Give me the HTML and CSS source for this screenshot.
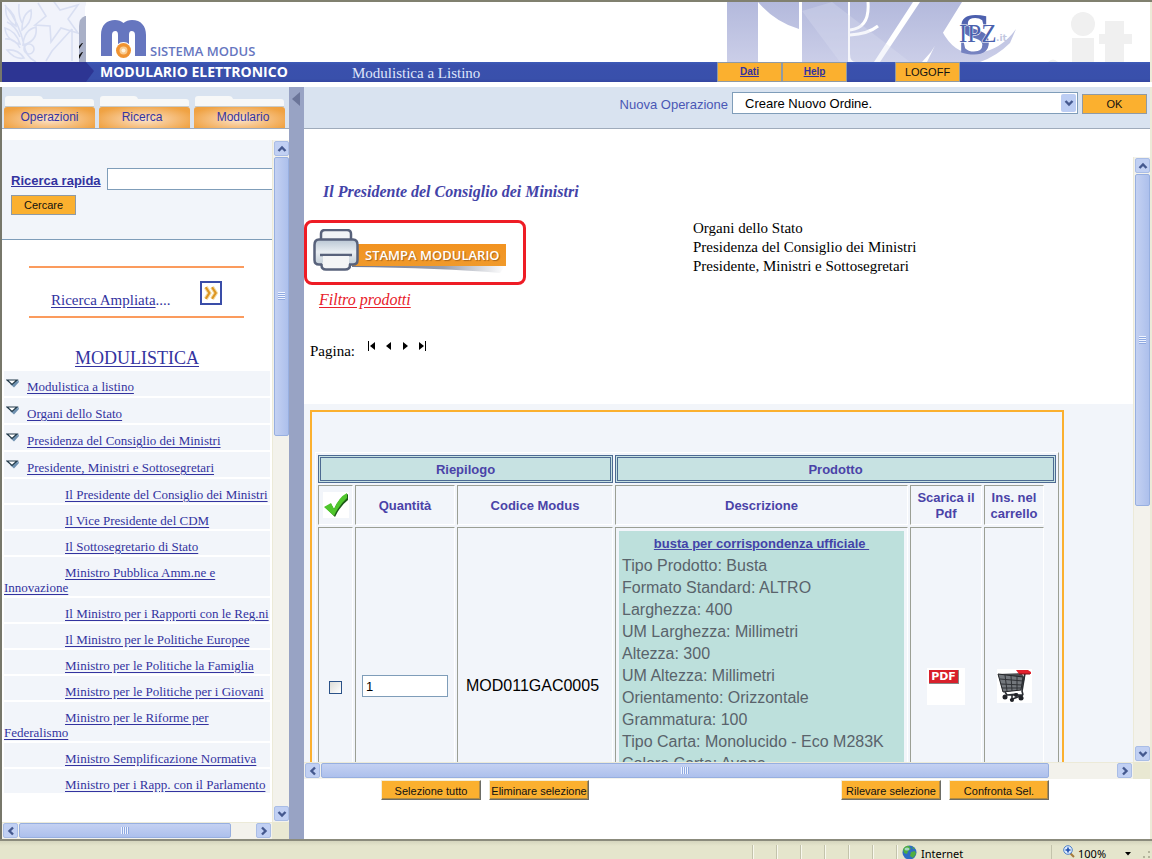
FILE: index.html
```html
<!DOCTYPE html>
<html lang="it">
<head>
<meta charset="utf-8">
<title>Sistema Modus - Modulario Elettronico</title>
<link rel="stylesheet" href="styles.css">
</head>
<body>
<svg class="defs" width="0" height="0" aria-hidden="true">
  <symbol id="chev-up" viewBox="0 0 10 10"><path d="M1.500 7L5 3.500L8.500 7" fill="none" stroke="#45598f" stroke-width="2.400"/></symbol>
  <symbol id="chev-down" viewBox="0 0 10 10"><path d="M1.500 3L5 6.500L8.500 3" fill="none" stroke="#45598f" stroke-width="2.400"/></symbol>
  <symbol id="chev-left" viewBox="0 0 10 10"><path d="M7 1.500L3.500 5L7 8.500" fill="none" stroke="#45598f" stroke-width="2.400"/></symbol>
  <symbol id="chev-right" viewBox="0 0 10 10"><path d="M3 1.500L6.500 5L3 8.500" fill="none" stroke="#45598f" stroke-width="2.400"/></symbol>
  <symbol id="node-open" viewBox="0 0 14 9"><path d="M4 5L13 2V3L8 8.500Z" fill="#6d8fae"/><path d="M1 1H13L7 7Z" fill="#7596b4"/><path d="M1 1H11L6 5.500Z" fill="#fff" stroke="#233b4a" stroke-width="1.200"/></symbol>
</svg>

<header class="banner">
  <svg class="emblem" width="84" height="60" viewBox="0 0 84 60" aria-hidden="true">
    <rect width="84" height="60" fill="#f1f3fb"/>
    <g fill="none" stroke="#d9dff2" stroke-width="1.600">
      <path d="M36 1L44 14L33 23L48 24L49 40L59 26L76 31L66 17L76 3L58 8L50 -3"/>
      <path d="M70 27L50 49L44 59M70 27V59"/>
      <path d="M3 3Q18 22 22 43Q24 55 34 60M17 2Q16 13 20 21M5 20Q14 24 18 35M3 37Q13 36 18 46M29 8Q20 12 20 28Q31 20 29 8ZM34 25Q22 28 21 43Q36 39 34 25ZM4 5Q2 17 14 24Q14 12 4 5ZM3 26Q4 38 18 42Q14 29 3 26ZM5 48Q13 58 22 56Q16 47 5 48Z"/>
      <circle cx="27" cy="47" r="5"/>
    </g>
    <path d="M84 0V60H83V6Q83 2 88 0Z" fill="#fff"/>
    <path d="M83 14Q77 16 77 24V60H84V14Z" fill="#a9b0c7"/>
    <path d="M81 41L77 47V44L80 41ZM81 50L77 57V53L80 50Z" fill="#111"/>
  </svg>
  <div class="brand">
    <svg width="46" height="40" viewBox="0 0 46 40" aria-hidden="true">
      <path d="M0 36V15C0 5 6 0 14 0Q19 0 22.500 3Q26 0 31 0C40 0 45 6 45 15V36H34V15Q34 11 30.500 11Q28 11 28 15V24H17V15Q17 11 14.500 11Q11 11 11 15V36Z" fill="#6676bf"/>
      <circle cx="22.500" cy="30.500" r="8.500" fill="#fff"/><circle cx="22.500" cy="30.500" r="7.500" fill="#f09331"/>
      <circle cx="22.500" cy="30.500" r="4" fill="#f9cc91"/><circle cx="22.500" cy="30.500" r="2" fill="#fff3df"/>
    </svg>
    <span class="brand-name">SISTEMA MODUS</span>
  </div>
  <svg class="watermark" width="430" height="60" viewBox="0 0 430 60" aria-hidden="true">
    <defs><linearGradient id="wash" x1="0" y1="0" x2="0" y2="1"><stop offset="0" stop-color="#b3b9dc"/><stop offset="1" stop-color="#cbcee8"/></linearGradient>
    <linearGradient id="ink" x1="0" y1="0" x2="0" y2="1"><stop offset="0" stop-color="#3950a5"/><stop offset="1" stop-color="#8791c8"/></linearGradient></defs>
    <path d="M7 0H38V60H7ZM38 0H79V27Q55 20 38 0ZM82 0H128V60H82ZM130 0H193L154 60H136Q130 60 130 52ZM200 0H242L211 50L202 60H160ZM296 27L290 41Q277 54 260 60H207L222 29Q235 54 258 51Q281 48 296 27Z" fill="url(#wash)"/>
    <path d="M148 0Q150 26 130 28M130 33Q148 32 158 24" fill="none" stroke="#fff" stroke-width="3"/>
    <path d="M82 9L112 0L190 60H120Z" fill="#dfe2f3" opacity=".3"/>
    <g fill="#f0f0f0"><circle cx="363" cy="22" r="12"/><rect x="352" y="36" width="22" height="24"/><path d="M385 19H404V32H412V42H404V60H385V42H379V32H385Z"/><path d="M328 60Q333 55 338 60Z"/></g>
    <text x="238" y="52" font-family="Liberation Serif, serif" font-size="60" font-weight="bold" fill="url(#ink)">S</text>
    <text x="239" y="40" font-family="Liberation Serif, serif" font-size="25" fill="#4b61ae" stroke="#fff" stroke-width="1" paint-order="stroke">IPZ</text>
    <text x="276" y="39" font-family="DejaVu Sans, sans-serif" font-size="9" font-weight="bold" fill="#c2c7df">.it</text>
  </svg>
</header>

<nav class="bluebar" aria-label="Principale">
  <span class="arrow-tail"></span>
  <span class="product">MODULARIO ELETTRONICO</span>
  <span class="section">Modulistica a Listino</span>
  <a class="chip" href="#dati">Dati</a>
  <a class="chip" href="#help">Help</a>
  <button class="chip logoff" type="button">LOGOFF</button>
</nav>

<main class="workspace">
  <aside class="sidebar">
    <div class="tabs">
      <button class="tab" type="button"><svg width="91" height="12" viewBox="0 0 91 12" aria-hidden="true"><path d="M1 12V4Q1 1 4 1H35Q38 1 39 4H87Q90 4 90 7V12Z" fill="#f7f8f8"/><path d="M1 11.500H90" stroke="#c9ccca"/></svg><span>Operazioni</span></button>
      <button class="tab" type="button"><svg width="91" height="12" viewBox="0 0 91 12" aria-hidden="true"><path d="M1 12V4Q1 1 4 1H35Q38 1 39 4H87Q90 4 90 7V12Z" fill="#f7f8f8"/><path d="M1 11.500H90" stroke="#c9ccca"/></svg><span class="tab-mid">Ricerca</span></button>
      <button class="tab" type="button"><svg width="91" height="12" viewBox="0 0 91 12" aria-hidden="true"><path d="M1 12V4Q1 1 4 1H35Q38 1 39 4H87Q90 4 90 7V12Z" fill="#f7f8f8"/><path d="M1 11.500H90" stroke="#c9ccca"/></svg><span class="tab-end">Modulario</span></button>
    </div>
    <div class="side-frame">
      <div class="side-view">
        <form class="quick">
          <div class="quick-row"><label for="q">Ricerca rapida</label><input id="q" type="text"></div>
          <button class="flat" type="button">Cercare</button>
        </form>
        <div class="advanced">
          <span class="adv-text"><a href="#ampliata">Ricerca Ampliata</a>....</span>
          <button class="go" type="button" aria-label="Vai"><svg width="18" height="20" viewBox="0 0 17 19"><path d="M3.500 4L7 9.500L3.500 15M9.500 4L13 9.500L9.500 15" fill="none" stroke="#f3dda6" stroke-width="4"/><path d="M3.500 4L7 9.500L3.500 15M9.500 4L13 9.500L9.500 15" fill="none" stroke="#dd9520" stroke-width="2"/></svg></button>
        </div>
        <h2><a href="#modulistica">MODULISTICA</a></h2>
        <ul class="tree">
          <li class="node"><svg width="14" height="9"><use href="#node-open"/></svg><a href="#n1">Modulistica a listino</a></li>
          <li class="node"><svg width="14" height="9"><use href="#node-open"/></svg><a href="#n2">Organi dello Stato</a></li>
          <li class="node"><svg width="14" height="9"><use href="#node-open"/></svg><a href="#n3">Presidenza del Consiglio dei Ministri</a></li>
          <li class="node"><svg width="14" height="9"><use href="#node-open"/></svg><a href="#n4">Presidente, Ministri e Sottosegretari</a></li>
          <li class="leaf"><a href="#l1">Il Presidente del Consiglio dei Ministri</a></li>
          <li class="leaf"><a href="#l2">Il Vice Presidente del CDM</a></li>
          <li class="leaf"><a href="#l3">Il Sottosegretario di Stato</a></li>
          <li class="leaf"><a href="#l4">Ministro Pubblica Amm.ne e Innovazione</a></li>
          <li class="leaf"><a href="#l5">Il Ministro per i Rapporti con le Reg.ni</a></li>
          <li class="leaf"><a href="#l6">Il Ministro per le Politiche Europee</a></li>
          <li class="leaf"><a href="#l7">Ministro per le Politiche la Famiglia</a></li>
          <li class="leaf"><a href="#l8">Ministro per le Politiche per i Giovani</a></li>
          <li class="leaf"><a href="#l9">Ministro per le Riforme per Federalismo</a></li>
          <li class="leaf"><a href="#l10">Ministro Semplificazione Normativa</a></li>
          <li class="leaf"><a href="#l11">Ministro per i Rapp. con il Parlamento</a></li>
        </ul>
      </div>
      <div class="vbar"><span class="cap"><svg width="10" height="10"><use href="#chev-up"/></svg></span><span class="thumb side-vthumb"><i class="grip"></i></span><span class="cap last"><svg width="10" height="10"><use href="#chev-down"/></svg></span></div>
      <div class="hbar"><span class="cap"><svg width="10" height="10"><use href="#chev-left"/></svg></span><span class="thumb side-hthumb"><i class="grip"></i></span><span class="cap last"><svg width="10" height="10"><use href="#chev-right"/></svg></span></div>
    </div>
  </aside>

  <div class="splitter"><svg width="8" height="14" viewBox="0 0 8 14" aria-hidden="true"><path d="M8 0V14L0 7Z" fill="#6b7599"/></svg></div>

  <section class="content">
    <form class="opbar">
      <label for="op">Nuova Operazione</label>
      <span class="pick"><select id="op"><option>Creare Nuovo Ordine.</option></select><span class="pick-btn"><svg width="10" height="10"><use href="#chev-down"/></svg></span></span>
      <button class="flat" type="button">OK</button>
    </form>
    <div class="main-frame">
      <div class="main-view">
        <div class="intro">
          <div class="intro-left">
            <h1>Il Presidente del Consiglio dei Ministri</h1>
            <button class="print" type="button">
              <svg class="printer" width="46" height="42" viewBox="0 0 46 42" aria-hidden="true">
                <defs><linearGradient id="pb" x1="0" y1="0" x2="0" y2="1"><stop offset="0" stop-color="#b9c6d3"/><stop offset=".5" stop-color="#e9eef2"/><stop offset="1" stop-color="#c3ced8"/></linearGradient></defs>
                <path d="M8 13V5Q8 1 12 1H34Q38 1 38 5V13" fill="#f1f3f6" stroke="#58627b" stroke-width="2.500"/>
                <path d="M6 10.500H40Q44.500 10.500 44.500 16V31Q44.500 35.500 40 35.500H6Q1.500 35.500 1.500 31V16Q1.500 10.500 6 10.500Z" fill="url(#pb)" stroke="#58627b" stroke-width="2.500"/>
                <path d="M7 26H39" stroke="#58627b" stroke-width="2.500"/>
                <path d="M10 27H36V36Q36 40.500 32 40.500H13Q8.500 40.500 8.500 36L10 33Z" fill="#f4f5f6"/>
                <path d="M8.500 35V36Q8.500 40.500 13 40.500H32Q37 40.500 37 36V35" fill="none" stroke="#58627b" stroke-width="2.500"/>
              </svg>
              <span class="print-tag">
                <span class="print-label">STAMPA MODULARIO</span>
                <svg width="153" height="8" viewBox="0 0 153 8" aria-hidden="true"><defs><linearGradient id="sh"><stop offset="0" stop-color="#6f7890"/><stop offset=".6" stop-color="#9aa0ae"/><stop offset="1" stop-color="#fff"/></linearGradient></defs><path d="M0 0H153L148 7Q90 2 0 1Z" fill="url(#sh)"/></svg>
              </span>
            </button>
            <a class="filter" href="#filtro">Filtro prodotti</a>
            <div class="pager">
              <span>Pagina:</span>
              <a href="#first" aria-label="Prima"><svg width="9" height="10" viewBox="0 0 9 10"><path d="M1 0H2V10H1ZM8 1V9L3 5Z"/></svg></a>
              <a href="#prev" aria-label="Precedente"><svg width="6" height="10" viewBox="0 0 6 10"><path d="M5 1V9L0 5Z"/></svg></a>
              <a href="#next" aria-label="Successiva"><svg width="6" height="10" viewBox="0 0 6 10"><path d="M1 1V9L6 5Z"/></svg></a>
              <a href="#last" aria-label="Ultima"><svg width="9" height="10" viewBox="0 0 9 10"><path d="M7 0H8V10H7ZM1 1V9L6 5Z"/></svg></a>
            </div>
          </div>
          <p class="path">Organi dello Stato<br>Presidenza del Consiglio dei Ministri<br>Presidente, Ministri e Sottosegretari</p>
        </div>
        <div class="list">
          <div class="list-box">
            <table>
              <colgroup><col class="c-check"><col class="c-qty"><col class="c-code"><col class="c-desc"><col class="c-pdf"><col class="c-cart"><col class="c-pad"></colgroup>
              <thead>
                <tr class="groups"><th colspan="3">Riepilogo</th><th colspan="4">Prodotto</th></tr>
                <tr class="heads">
                  <th><svg class="tick" width="26" height="26" viewBox="0 0 26 26" role="img" aria-label="Seleziona"><rect width="26" height="26" fill="#fff"/><path d="M2 15L8 12L11 17Q16 6 25 2V8Q17 14 12 25Z" fill="#1d5a18"/><path d="M1 15L8 11L11 17Q16 5 24 1V6Q16 13 11 24Z" fill="#4fc62c"/></svg></th>
                  <th>Quantità</th><th>Codice Modus</th><th>Descrizione</th><th>Scarica il Pdf</th><th>Ins. nel carrello</th><td class="bare"></td>
                </tr>
              </thead>
              <tbody>
                <tr class="item">
                  <td><input type="checkbox" aria-label="Seleziona prodotto"></td>
                  <td><input class="qty" type="text" value="1" aria-label="Quantità"></td>
                  <td class="code">MOD011GAC0005</td>
                  <td class="desc-cell"><div class="desc"><a href="#busta">busta per corrispondenza ufficiale&nbsp;</a>
                    <p>Tipo Prodotto: Busta</p><p>Formato Standard: ALTRO</p><p>Larghezza: 400</p><p>UM Larghezza: Millimetri</p><p>Altezza: 300</p><p>UM Altezza: Millimetri</p><p>Orientamento: Orizzontale</p><p>Grammatura: 100</p><p>Tipo Carta: Monolucido - Eco M283K</p><p>Colore Carta: Avana</p></div></td>
                  <td class="pdf-cell"><a class="pdf" href="#pdf"><span>PDF</span></a></td>
                  <td class="cart-cell"><a class="cart" href="#cart" aria-label="Inserisci nel carrello"><svg width="34" height="34" viewBox="0 0 34 34">
                    <path d="M1 5L24 4L28 9L24 21L6 23Z" fill="#4a4d51"/>
                    <path d="M1 5L26 8L24 21L6 23Z" fill="#73777c" stroke="#26282b"/>
                    <path d="M3 10L26 12M4 15L25 16M5 19L24 19M8 6L10 22M14 7L15 22M20 7L20 21" stroke="#303236" fill="none"/>
                    <path d="M28 4L25 22L26 26M8 23L10 26H26L13 31M10 26L20 25L26 30M15 31V25" stroke="#2b2e33" stroke-width="1.600" fill="none"/>
                    <g fill="#202227"><circle cx="8" cy="28" r="2.500"/><circle cx="15" cy="31" r="2"/><circle cx="24" cy="29" r="2.500"/><circle cx="19" cy="26" r="2"/></g>
                    <path d="M19 1H31L34 3V5H22Z" fill="#e2202d"/><path d="M22 5H33" stroke="#7c1118"/>
                  </svg></a></td>
                  <td class="bare"></td>
                </tr>
              </tbody>
            </table>
          </div>
        </div>
      </div>
      <div class="vbar"><span class="cap"><svg width="10" height="10"><use href="#chev-up"/></svg></span><span class="thumb main-vthumb"><i class="grip"></i></span><span class="cap last"><svg width="10" height="10"><use href="#chev-down"/></svg></span></div>
      <div class="hbar"><span class="cap"><svg width="10" height="10"><use href="#chev-left"/></svg></span><span class="thumb main-hthumb"><i class="grip"></i></span><span class="cap last"><svg width="10" height="10"><use href="#chev-right"/></svg></span></div>
    </div>
    <div class="actions">
      <button type="button">Selezione tutto</button><button type="button">Eliminare selezione</button>
      <button class="second" type="button">Rilevare selezione</button><button type="button">Confronta Sel.</button>
    </div>
  </section>
</main>

<footer class="status">
  <span class="cell"></span><span class="cell"></span><span class="cell"></span><span class="cell"></span><span class="cell"></span><span class="cell"></span>
  <span class="zone"><svg width="15" height="15" viewBox="0 0 15 15" aria-hidden="true"><circle cx="7.500" cy="7.500" r="7" fill="#2e6cc4"/><path d="M1 4Q4 0 7 1L9 4L6 6L5 9L2 8ZM9 7L13 6L14 9L11 13L8 11ZM10 1L13 4L11 4Z" fill="#4fae3f"/><ellipse cx="5" cy="4" rx="2.500" ry="1.500" fill="#c8e4ff" opacity=".7"/></svg>Internet</span>
  <span class="zoom"><svg width="12" height="13" viewBox="0 0 12 13" aria-hidden="true"><path d="M7 8L11 12" stroke="#a57a3c" stroke-width="2"/><circle cx="5" cy="5" r="4.300" fill="#dcebff" stroke="#4c7fc9"/><path d="M5 2.500V7.500M2.500 5H7.500" stroke="#1d4fae" stroke-width="1.600"/></svg>100%<svg class="drop" width="6" height="4" viewBox="0 0 6 4" aria-hidden="true"><path d="M0 0H6L3 3.500Z"/></svg></span>
  <svg class="resize" width="8" height="8" viewBox="0 0 8 8" aria-hidden="true"><path d="M5 0H7V2H5ZM5 5H7V7H5ZM0 5H2V7H0Z" fill="#b4b49c"/></svg>
</footer>
</body>
</html>
```

FILE: styles.css
```css
* { box-sizing: border-box; }

body {
  margin: 0;
  height: 100vh;
  display: flex;
  flex-direction: column;
  overflow: hidden;
  background: #fff;
  border-top: 2px solid #80806f;
  font-family: "Liberation Sans", Arial, sans-serif;
  font-size: 13px;
}

button, input, select { font: inherit; margin: 0; }
button { padding: 0; cursor: pointer; }
a { color: #33339f; }
svg { display: block; flex: none; }
.defs { position: absolute; }

/* Banner */
.banner {
  flex: none;
  height: 60px;
  display: flex;
  border-left: 2px solid #77776a;
  border-right: 2px solid #ecead8;
}
.brand { display: flex; align-items: flex-start; gap: 3px; padding: 18px 0 0 15px; }
.brand-name {
  margin-top: 22px;
  font: 600 13px/18px "Open Sans", sans-serif;
  color: #6676bf;
}
.watermark { margin-left: auto; }

.bluebar {
  flex: none;
  height: 20px;
  display: flex;
  align-items: stretch;
  background: linear-gradient(#3d5bb8, #3a50ad 3px, #3950ab 17px, #3345a0);
  border-left: 2px solid #77776a;
  border-right: 2px solid #ecead8;
}
.arrow-tail {
  width: 92px;
  background: #2d3593;
  clip-path: polygon(0 0, 84px 0, 92px 9px, 84px 100%, 0 100%);
}
.product {
  width: 258px;
  padding-left: 6px;
  font: 700 14px/20px "Open Sans", sans-serif;
  color: #fff;
}
.section { flex: 1; font: 15px/22px "Liberation Serif", serif; color: #dfe6fb; }
.chip {
  width: 65px;
  border: 1px solid #8f9aa5;
  background: #fbb02f;
  font-size: 10px;
  line-height: 17px;
  font-weight: bold;
  text-align: center;
}
.logoff { margin: 0 190px 0 48px; font-size: 11px; font-weight: normal; color: #111; }

/* Workspace */
.workspace {
  flex: 1;
  min-height: 0;
  display: flex;
  margin-top: 5px;
  border-left: 2px solid #77776a;
  border-right: 2px solid #ecead8;
}
.sidebar { width: 287px; flex: none; display: flex; flex-direction: column; }
.tabs {
  height: 42px;
  flex: none;
  display: flex;
  gap: 4px;
  align-items: flex-end;
  padding: 0 2px;
  background: #d9e3f0;
  border-bottom: 1px solid #9fabbb;
}
.tab {
  width: 91px;
  border: 0;
  background: none;
  font-size: 12px;
  color: #3434a4;
}
.tab span {
  display: block;
  height: 21px;
  line-height: 20px;
  border-radius: 3px 3px 0 0;
  background: radial-gradient(ellipse at 50% 60%, #fbe3c9 0, #f7c68e 35%, #f0a344 80%, #ee9f3e);
}
.tab .tab-mid { padding-right: 5px; }
.tab .tab-end { padding-left: 7px; }

.side-frame, .main-frame {
  flex: 1;
  min-height: 0;
  display: grid;
  background: #e9e8d2;
}
.side-frame { margin-top: 11px; grid-template: 1fr 17px / 1fr 17px; }
.main-frame { margin-top: 28px; grid-template: 1fr 17px / 1fr 17px; }
.side-view, .main-view { overflow: hidden; background: #fff; min-width: 0; min-height: 0; }

.quick {
  height: 100px;
  padding: 28px 0 0 9px;
  background: #f2f5fa;
  border-bottom: 1px solid #7f9db9;
}
.quick-row { display: flex; gap: 6px; margin-bottom: 5px; }
.quick label {
  flex: none;
  padding-top: 4px;
  font-size: 13px;
  line-height: 18px;
  font-weight: bold;
  color: #33339f;
  text-decoration: underline;
}
.quick input { flex: none; width: 180px; height: 22px; border: 1px solid #7f9db9; background: #fff; }
.flat {
  width: 65px;
  height: 20px;
  border: 1px solid #8f9aa5;
  background: #fbb02f;
  font-size: 11px;
  color: #111;
}
.advanced {
  margin: 26px 28px 0 27px;
  height: 52px;
  display: flex;
  justify-content: space-between;
  padding: 13px 22px 0;
  border-top: 2px solid #fb9b5d;
  border-bottom: 2px solid #fb9b5d;
  font: 15px/20px "Liberation Serif", serif;
  color: #33339f;
}
.adv-text { padding-top: 9px; }
.go {
  width: 22px;
  height: 24px;
  border: 2px solid #3a4da8;
  background: #fff;
}
h2 {
  margin: 30px 0 3px;
  font: 18px/20px "Liberation Serif", serif;
  text-align: center;
}
.tree {
  margin: 0;
  padding: 0 2px;
  list-style: none;
  display: flex;
  flex-direction: column;
  gap: 2px;
  font: 13px/15px "Liberation Serif", serif;
}
.tree li { background: #f2f5fa; }
.tree a, h2 a, .adv-text a { text-underline-offset: 2px; }
.node { display: flex; gap: 7px; padding: 8px 0 2px 2px; }
.leaf { padding: 8px 0 1px; text-indent: 61px; }

/* Scroll bars */
.vbar, .hbar { display: flex; background: #f3f2ec; }
.vbar { flex-direction: column; padding: 1px; border-left: 1px solid #ecead8; }
.hbar { padding: 0 1px 1px; border-top: 1px solid #ecead8; }
.cap {
  width: 15px;
  height: 15px;
  flex: none;
  display: grid;
  place-items: center;
  border: 1px solid #a9bde6;
  border-radius: 2px;
  background: #c1d0f3;
}
.cap.last { margin-top: auto; }
.hbar .cap.last { margin: 0 0 0 auto; }
.thumb {
  display: grid;
  place-items: center;
  border: 1px solid #97afe0;
  border-radius: 2px;
  background: linear-gradient(90deg, #c4d1f2, #adc0ec);
}
.hbar .thumb { background: linear-gradient(#c4d1f2, #adc0ec); height: 15px; margin-left: 1px; }
.vbar .thumb { width: 15px; margin-top: 1px; }
.grip { width: 7px; height: 8px; background: repeating-linear-gradient(#eef3ff 0 1px, #8fa9e0 1px 2px); }
.hbar .grip { width: 8px; height: 7px; background: repeating-linear-gradient(90deg, #eef3ff 0 1px, #8fa9e0 1px 2px); }
.side-vthumb { height: 41%; }
.side-hthumb { width: 79%; }
.main-vthumb { height: 55%; }
.main-hthumb { width: 88%; }

.splitter { width: 15px; flex: none; background: #98a3c4; padding: 5px 0 0 3px; }

/* Content */
.content { flex: 1; min-width: 0; display: flex; flex-direction: column; }
.opbar {
  height: 42px;
  flex: none;
  display: flex;
  justify-content: flex-end;
  align-items: flex-start;
  gap: 4px;
  padding: 5px 3px 0 0;
  background: #d9e3f0;
  border-bottom: 1px solid #9fabbb;
}
.opbar label { line-height: 26px; color: #4a57b5; }
.opbar .flat { margin-top: 2px; }
.pick { display: flex; width: 346px; height: 22px; border: 1px solid #7f9db9; background: #fff; }
.pick select {
  flex: 1;
  min-width: 0;
  appearance: none;
  border: 0;
  padding: 0 12px;
  background: none;
  color: #000;
}
.pick-btn { width: 15px; margin: 1px; display: grid; place-items: center; border-radius: 2px; background: #bccdf3; }

.intro {
  height: 247px;
  display: flex;
  font-family: "Liberation Serif", serif;
}
.intro-left { width: 389px; flex: none; padding-top: 25px; }
h1 {
  margin: 0 0 18px 19px;
  font: italic bold 16px/20px "Liberation Serif", serif;
  color: #4343a8;
}
.print {
  width: 222px;
  height: 65px;
  display: flex;
  padding: 6px;
  border: 3px solid #ee1c25;
  border-radius: 8px;
  background: #fff;
}
.printer { position: relative; z-index: 1; }
.print-tag { margin: 15px 0 0 -7px; }
.print-label {
  display: block;
  padding: 0 6px 0 13px;
  background: linear-gradient(#f29320, #f09a2b);
  font: 600 13px/22px "Open Sans", sans-serif;
  color: #fff;
  text-shadow: 1px 1px 1px #a8641a;
}
.filter {
  display: block;
  width: max-content;
  margin: 5px 0 0 15px;
  font: italic 16px/20px "Liberation Serif", serif;
  color: #e8202a;
  text-underline-offset: 2px;
}
.pager { display: flex; margin: 31px 0 0 6px; font-size: 15px; line-height: 20px; }
.pager span { width: 57px; }
.pager a { margin-right: 10px; }
.path { margin: 0; padding-top: 62px; font-size: 15px; line-height: 19px; }

.list { padding: 6px 6px 0; background: #f2f5fa; }
.list-box {
  width: max-content;
  padding: 40px 3px 0;
  border: 2px solid #fbb02f;
}
table {
  table-layout: fixed;
  width: 744px;
  border-collapse: separate;
  border-spacing: 2px;
  border: 1px solid #fff;
  border-right-color: #9b9f94;
}
.c-check { width: 35px; }
.c-qty { width: 100px; }
.c-code { width: 156px; }
.c-desc { width: 293px; }
.c-pdf { width: 72px; }
.c-cart { width: 60px; }
.c-pad { width: 10px; }
th, td {
  padding: 0 3px;
  border: 1px solid #9b9f94;
  border-right-color: #fff;
  border-bottom-color: #fff;
  text-align: center;
  vertical-align: middle;
}
th { padding-top: 2px; line-height: 16px; color: #4a43a8; }
.groups th { height: 28px; border: 3px double #4d6a92; background: #c7e2e2; }
.heads th { height: 40px; }
.heads .tick { margin: -3px auto 0; }
.bare { border: 0; padding: 0; }
.item td { height: 318px; }
.item input { vertical-align: middle; }
.item input[type="checkbox"] {
  appearance: none;
  width: 13px;
  height: 13px;
  border: 1px solid #2b5288;
  background: linear-gradient(135deg, #dcdcd7, #fff);
}
.qty { width: 86px; height: 22px; padding: 0 3px; border: 1px solid #7f9db9; background: #fff; }
.item .code { padding-right: 8px; font-size: 16px; }
.item .desc-cell { padding: 3px; vertical-align: top; }
.desc { height: 310px; padding: 2px 3px; background: #bde0dc; text-align: left; color: #59636b; font-size: 16px; line-height: 22px; }
.desc a { display: block; width: max-content; margin: auto; font-size: 13px; font-weight: bold; color: #4343a8; }
.desc p { margin: 0; }
.pdf { display: block; width: 38px; height: 37px; margin: 0 auto 0 13px; padding: 2px 2px; background: #fff; text-decoration: none; }
.pdf span {
  display: block;
  width: 30px;
  height: 14px;
  background: #d8202b;
  border-right: 1px solid #888;
  border-bottom: 1px solid #888;
  color: #fff;
  font: bold 11px/13px "DejaVu Sans", sans-serif;
}
.cart { display: block; width: 35px; background: #fff; margin: auto; }

.actions { flex: none; height: 60px; display: flex; gap: 8px; padding: 1px 101px 0 77px; }
.actions button {
  width: 100px;
  height: 20px;
  padding-top: 2px;
  border: 1px solid;
  border-color: #f3edd9 #6d6d66 #6d6d66 #f3edd9;
  box-shadow: inset -1px -1px #b08b45;
  background: #fbb02f;
  font-size: 11px;
  color: #111;
  white-space: nowrap;
}
.actions .second { margin-left: auto; }

/* Status bar */
.status {
  flex: none;
  height: 20px;
  display: flex;
  justify-content: flex-end;
  align-items: flex-start;
  padding-top: 4px;
  border-top: 2px solid #8b8b7c;
  background: linear-gradient(#d5d5bd, #e5e5cc 5px);
  font: 11px/18px "Noto Sans", sans-serif;
  color: #000;
}
.cell, .zone { height: 16px; border-left: 1px solid #c3c3ab; box-shadow: inset 1px 0 #f8f8ee; }
.cell { width: 24px; }
.zone { width: 155px; display: flex; gap: 4px; padding-left: 5px; }
.zoom { width: 92px; display: flex; gap: 3px; padding-left: 11px; height: 16px; border-left: 1px solid #c3c3ab; }
.zoom .drop { margin: 7px 0 0 16px; }
.resize { margin: 6px 1px 0 0; }
```
